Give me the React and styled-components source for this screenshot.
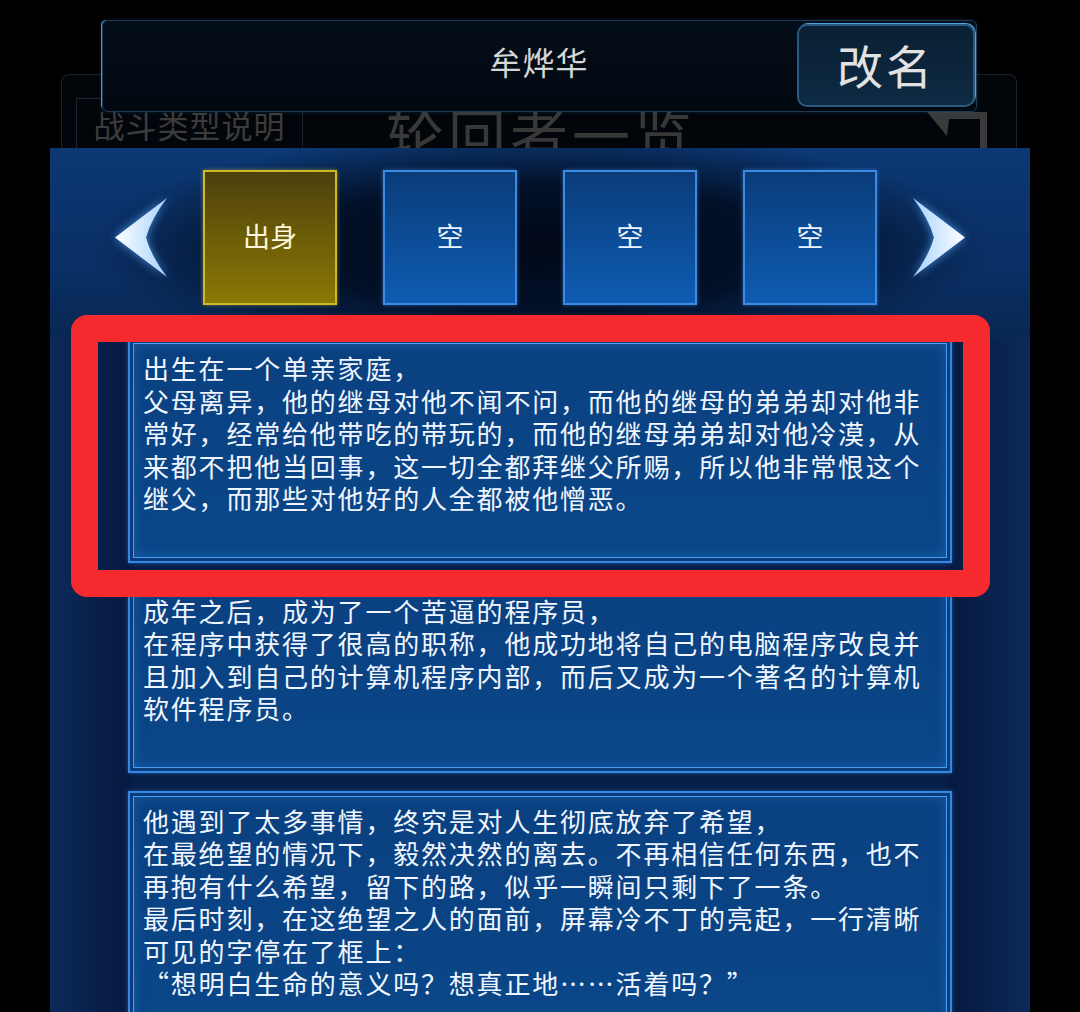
import React from "react";
import styled, { createGlobalStyle } from "styled-components";

const GlobalStyle = createGlobalStyle`
    html, body {
        margin: 0;
        padding: 0;
        background: #000;
    }
`

//styled
const Screen = styled.div`
    position: relative;
    width: 1080px;
    height: 1012px;
    overflow: hidden;
    background: #000;
    font-family: "Noto Sans CJK SC", "Noto Sans", sans-serif;
`

// page underneath the popup
const BackPage = styled.div`
    box-sizing: border-box;
    margin: 74px 63px 0 61px;
    height: 938px;
    border: 1px solid #18232d;
    border-bottom: none;
    border-radius: 8px 8px 0 0;
    background: #02060a;
`
const BackHeader = styled.div`
    display: flex;
    align-items: flex-start;
    padding: 23px 0 0 14px;
`
const TypeTab = styled.div`
    box-sizing: border-box;
    width: 227px;
    height: 52px;
    border: 1px solid #1b252e;
    display: flex;
    align-items: center;
    justify-content: center;
    font-size: 31px;
    color: #3c3c3c;
    letter-spacing: 1px;
`
const BackTitle = styled.div`
    margin: 6px 0 0 83px;
    font-size: 58px;
    line-height: 1;
    color: #383838;
    letter-spacing: 4px;
`
const BackIcon = styled.svg`
    margin: 14px 29px 0 auto;
    flex-shrink: 0;
`

// popup
const Overlay = styled.div`
    position: absolute;
    inset: 0;
    display: flex;
    flex-direction: column;
`
const NameBar = styled.div`
    flex-shrink: 0;
    box-sizing: border-box;
    margin: 20px 0 0 102px;
    width: 875px;
    height: 92px;
    padding: 3px 1px 4px 0;
    border: 1px solid #1d3b55;
    border-radius: 6px;
    background: linear-gradient(180deg, #040e1a, #020810);
    box-shadow: -2px -1px 0 -1px #3a9ccc, 0 0 4px rgba(40, 120, 180, 0.25);
    display: grid;
    grid-template-columns: 178px 1fr 178px;
    align-items: center;
`
const NameText = styled.div`
    grid-column: 2;
    text-align: center;
    font-size: 32px;
    color: #d6d6d6;
    letter-spacing: 1px;
    padding-bottom: 10px;
`
const RenameButton = styled.div`
    grid-column: 3;
    box-sizing: border-box;
    height: 100%;
    border: 2px solid #2a5a82;
    border-radius: 10px;
    background: linear-gradient(180deg, #0b2033, #0d2a44);
    box-shadow: 1px -1px 0 0 #4aa6d8;
    display: flex;
    align-items: center;
    justify-content: center;
    font-size: 46px;
    color: #e2e2e2;
    letter-spacing: 3px;
    padding-bottom: 4px;
`
const Panel = styled.div`
    flex-shrink: 0;
    margin: 36px 0 0 50px;
    width: 980px;
    min-height: 900px;
    background: linear-gradient(90deg, #0c2a5a 0%, #081d45 6%, #061b42 8%, #06204a 9%, #06204a 91%, #061b42 92%, #081d45 94%, #0c2a5a 100%);
`
const TabRow = styled.div`
    display: flex;
    justify-content: center;
    align-items: center;
    padding: 22px 0 33px;
    background:
        radial-gradient(ellipse 46% 60% at 50% 52%, #010818 0%, #021129 55%, rgba(6, 30, 70, 0) 100%),
        linear-gradient(180deg, #0c3874 0%, #0a2e62 70%, #082752 100%);
`
const Arrow = styled.svg`
    flex-shrink: 0;
    margin: ${(props) => (props.$flip ? "0 0 0 36px" : "0 36px 0 0")};
    transform: ${(props) => (props.$flip ? "scaleX(-1)" : "none")};
    filter: drop-shadow(0 0 5px rgba(90, 170, 255, 0.8));
`
const Tab = styled.div`
    box-sizing: border-box;
    width: 134px;
    height: 135px;
    margin-left: ${(props) => (props.$first ? "0" : "46px")};
    border: 2px solid ${(props) => (props.$active ? "#cdb82a" : "#3b8ae4")};
    background: ${(props) =>
        props.$active
            ? "linear-gradient(180deg, #4d400c 0%, #6c5d08 50%, #8b7805 100%)"
            : "linear-gradient(180deg, #0a3c78 0%, #0c4c96 50%, #0f5cb2 100%)"};
    box-shadow: 0 0 4px ${(props) => (props.$active ? "rgba(220, 200, 40, 0.5)" : "rgba(70, 150, 240, 0.5)")};
    display: flex;
    align-items: center;
    justify-content: center;
    font-size: 27px;
    padding-bottom: 4px;
    color: ${(props) => (props.$active ? "#fff8dc" : "#eaf5ff")};
`
const CardList = styled.div`
    display: flex;
    flex-direction: column;
    gap: 18px;
    padding: 0 78px;
`
const Card = styled.div`
    box-sizing: border-box;
    padding: 12px 14px 46px 13px;
    border: 2px solid #3488e2;
    background: linear-gradient(180deg, #0a4080 0%, #0a4789 100%);
    box-shadow:
        inset 0 0 0 3px #0b3d7c,
        inset 0 0 0 4px #4a9ef2,
        inset 0 0 12px 5px rgba(50, 130, 220, 0.35),
        0 0 4px rgba(60, 140, 240, 0.5);
`
const Line = styled.div`
    font-size: 26px;
    line-height: 32.5px;
    letter-spacing: 1.8px;
    color: #f0f6ff;
    white-space: nowrap;
`
const Highlight = styled.div`
    position: absolute;
    left: 71px;
    top: 315px;
    width: 919px;
    height: 282px;
    box-sizing: border-box;
    border: 27px solid #f42a2e;
    border-radius: 16px;
    pointer-events: none;
`

const story = [
    [
        "出生在一个单亲家庭，",
        "父母离异，他的继母对他不闻不问，而他的继母的弟弟却对他非",
        "常好，经常给他带吃的带玩的，而他的继母弟弟却对他冷漠，从",
        "来都不把他当回事，这一切全都拜继父所赐，所以他非常恨这个",
        "继父，而那些对他好的人全都被他憎恶。",
    ],
    [
        "成年之后，成为了一个苦逼的程序员，",
        "在程序中获得了很高的职称，他成功地将自己的电脑程序改良并",
        "且加入到自己的计算机程序内部，而后又成为一个著名的计算机",
        "软件程序员。",
    ],
    [
        "他遇到了太多事情，终究是对人生彻底放弃了希望，",
        "在最绝望的情况下，毅然决然的离去。不再相信任何东西，也不",
        "再抱有什么希望，留下的路，似乎一瞬间只剩下了一条。",
        "最后时刻，在这绝望之人的面前，屏幕冷不丁的亮起，一行清晰",
        "可见的字停在了框上：",
        "“想明白生命的意义吗？想真正地……活着吗？”",
    ],
];

const tabs = ["出身", "空", "空", "空"];

function NavArrow({ id, flip }) {
    return (
        <Arrow $flip={flip} width="52" height="80" viewBox="0 0 52 80">
            <defs>
                <linearGradient id={id} x1="0" y1="0" x2="1" y2="0">
                    <stop offset="0" stopColor="#ffffff" />
                    <stop offset="1" stopColor="#a6d2ff" />
                </linearGradient>
            </defs>
            <path d="M52 0 L0 39.5 L52 79 Q36 58 31 39.5 Q36 21 52 0 Z" fill={`url(#${id})`} />
        </Arrow>
    );
}

function App() {
    return (
        <Screen>
            <GlobalStyle />
            <BackPage>
                <BackHeader>
                    <TypeTab>战斗类型说明</TypeTab>
                    <BackTitle>轮回者一览</BackTitle>
                    <BackIcon width="60" height="40" viewBox="0 0 60 40">
                        <path d="M0 0 H60 V40 H53 V7 H22 L20 24 Z" fill="#3a3a3a" />
                    </BackIcon>
                </BackHeader>
            </BackPage>

            <Overlay>
                <NameBar>
                    <NameText>牟烨华</NameText>
                    <RenameButton>改名</RenameButton>
                </NameBar>
                <Panel>
                    <TabRow>
                        <NavArrow id="arrowLeft" />
                        {tabs.map((label, i) => (
                            <Tab key={i} $first={i === 0} $active={i === 0}>
                                {label}
                            </Tab>
                        ))}
                        <NavArrow id="arrowRight" flip />
                    </TabRow>
                    <CardList>
                        {story.map((lines, i) => (
                            <Card key={i}>
                                {lines.map((text, j) => (
                                    <Line key={j}>{text}</Line>
                                ))}
                            </Card>
                        ))}
                    </CardList>
                </Panel>
            </Overlay>

            <Highlight />
        </Screen>
    );
}

export default App;
